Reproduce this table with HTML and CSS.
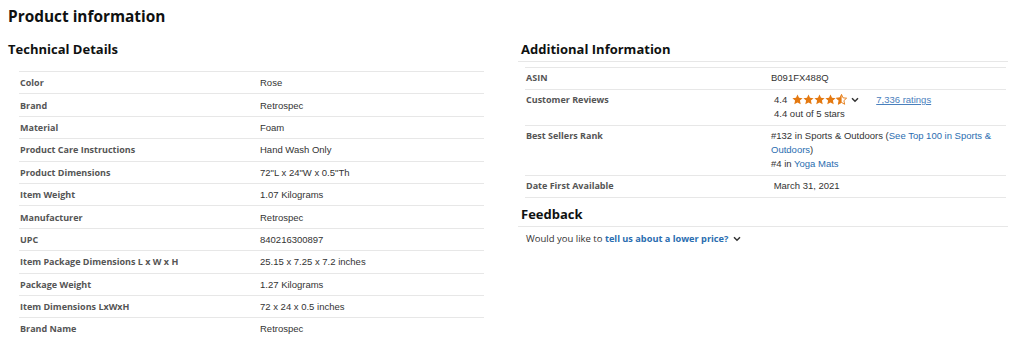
FILE: index.html
```html
<!DOCTYPE html>
<html lang="en">
<head>
<meta charset="utf-8">
<title>Product information</title>
<link rel="stylesheet" href="styles.css">
</head>
<body>
<main class="page">
  <h1 class="title">Product information</h1>
  <div class="cols">
    <section class="col col-left">
      <h2 class="sec-title">Technical Details</h2>
      <div class="spec spec-tech">
        <div class="row"><span class="label">Color</span><span class="value">Rose</span></div>
        <div class="row"><span class="label">Brand</span><span class="value">Retrospec</span></div>
        <div class="row"><span class="label">Material</span><span class="value">Foam</span></div>
        <div class="row"><span class="label">Product Care Instructions</span><span class="value">Hand Wash Only</span></div>
        <div class="row"><span class="label">Product Dimensions</span><span class="value">72"L x 24"W x 0.5"Th</span></div>
        <div class="row"><span class="label">Item Weight</span><span class="value">1.07 Kilograms</span></div>
        <div class="row"><span class="label">Manufacturer</span><span class="value">Retrospec</span></div>
        <div class="row"><span class="label">UPC</span><span class="value">840216300897</span></div>
        <div class="row"><span class="label">Item Package Dimensions L x W x H</span><span class="value">25.15 x 7.25 x 7.2 inches</span></div>
        <div class="row"><span class="label">Package Weight</span><span class="value">1.27 Kilograms</span></div>
        <div class="row"><span class="label">Item Dimensions LxWxH</span><span class="value">72 x 24 x 0.5 inches</span></div>
        <div class="row"><span class="label">Brand Name</span><span class="value">Retrospec</span></div>
      </div>
    </section>

    <section class="col col-right">
      <h2 class="sec-title ruled">Additional Information</h2>
      <div class="spec spec-add">
        <div class="row"><span class="label">ASIN</span><span class="value">B091FX488Q</span></div>
        <div class="row">
          <span class="label">Customer Reviews</span>
          <span class="value">
            <span class="rating-line">
              <span class="rating-num">4.4</span>
              <svg class="stars" width="55" height="11" viewBox="0 0 55 11" aria-hidden="true">
                <defs>
                  <polygon id="star" points="5.5,0.4 7,3.8 10.6,4.2 7.9,6.6 8.7,10.3 5.5,8.4 2.3,10.3 3.1,6.6 0.4,4.2 4,3.8"/>
                  <clipPath id="half"><rect x="0" y="0" width="5.6" height="11"/></clipPath>
                </defs>
                <use href="#star" x="0" fill="#e47911"/>
                <use href="#star" x="11" fill="#e47911"/>
                <use href="#star" x="22" fill="#e47911"/>
                <use href="#star" x="33" fill="#e47911"/>
                <g transform="translate(44 0)">
                  <use href="#star" fill="none" stroke="#e47911" stroke-width="0.9" stroke-linejoin="round"/>
                  <use href="#star" fill="#e47911" clip-path="url(#half)"/>
                </g>
              </svg>
              <svg class="chev" width="8" height="6" viewBox="0 0 8 6" aria-hidden="true"><polyline points="1,1.2 4,4.2 7,1.2" fill="none" stroke="#333" stroke-width="1.5"/></svg>
              <a class="ratings" href="#">7,336 ratings</a>
            </span>
            <span class="block">4.4 out of 5 stars</span>
          </span>
        </div>
        <div class="row">
          <span class="label">Best Sellers Rank</span>
          <span class="value">#132 in Sports &amp; Outdoors (<a href="#">See Top 100 in Sports &amp;<br>Outdoors</a>)<br>#4 in <a href="#">Yoga Mats</a></span>
        </div>
        <div class="row"><span class="label">Date First Available</span><span class="value">&nbsp;March 31, 2021</span></div>
      </div>

      <h2 class="sec-title ruled feedback-title">Feedback</h2>
      <p class="feedback">Would you like to <a href="#">tell us about a lower price?</a><svg class="chev" width="8" height="6" viewBox="0 0 8 6" aria-hidden="true"><polyline points="1,1.2 4,4.2 7,1.2" fill="none" stroke="#333" stroke-width="1.5"/></svg></p>
    </section>
  </div>
</main>
</body>
</html>
```

FILE: styles.css
```css
html, body {
  margin: 0;
  padding: 0;
  background: #ffffff;
}

.page {
  padding: 7px 8px 0 8px;
  font-family: "Liberation Sans", Arial, sans-serif;
  color: #333333;
}

.title {
  margin: 0;
  font-family: "Open Sans", Lato, sans-serif;
  font-weight: 700;
  font-size: 15.4px;
  line-height: 20px;
  color: #0f1111;
}

.cols {
  display: grid;
  grid-template-columns: 490px 490px;
  column-gap: 20px;
}

.sec-title {
  margin: 13.6px 0 0 0;
  font-family: "Open Sans", Lato, sans-serif;
  font-weight: 700;
  font-size: 13px;
  line-height: 16px;
  color: #0f1111;
}

.ruled {
  padding: 0 0 4.4px 3px;
  border-bottom: 1px solid #e7e7e7;
}

.spec-tech {
  margin: 14.4px 14px 0 11px;
  border-top: 1px solid #e7e7e7;
}

.spec-tech .row {
  display: grid;
  grid-template-columns: 241px 1fr;
  align-items: center;
  height: 22.4px;
  box-sizing: border-box;
  border-bottom: 1px solid #e7e7e7;
}

.label {
  font-family: "Open Sans", Lato, sans-serif;
  font-weight: 700;
  font-size: 9px;
  color: #555555;
  padding-left: 1px;
}

.value {
  font-family: "Liberation Sans", Arial, sans-serif;
  font-size: 9.5px;
  color: #333333;
}

.spec-add {
  margin: 5px 2px 0 7px;
  border-top: 1px solid #e7e7e7;
}

.spec-add .row {
  display: grid;
  grid-template-columns: 246px 1fr;
  align-items: start;
  padding: 3px 0 4px 0;
  line-height: 14px;
  border-bottom: 1px solid #e7e7e7;
}

.spec-add a {
  color: #2a6db0;
  text-decoration: none;
}

.rating-line {
  display: flex;
  align-items: center;
  height: 14px;
  padding-left: 3px;
}

.rating-num {
  margin-right: 5px;
}

.stars {
  display: block;
  margin-right: 4px;
}

.chev {
  display: inline-block;
}

.spec-add a.ratings {
  margin-left: 17px;
  color: #4a80bd;
  text-decoration: underline;
}

.block {
  display: block;
  padding-left: 3px;
}

.feedback-title {
  margin-top: 7.6px;
}

.feedback {
  margin: 5px 0 0 8px;
  font-family: "Open Sans", Lato, sans-serif;
  font-size: 9.5px;
  line-height: 14px;
  color: #333333;
}

.feedback a {
  color: #2a6db0;
  font-weight: 700;
  font-size: 9.2px;
  text-decoration: none;
}

.feedback .chev {
  margin-left: 5px;
  vertical-align: middle;
}
```
